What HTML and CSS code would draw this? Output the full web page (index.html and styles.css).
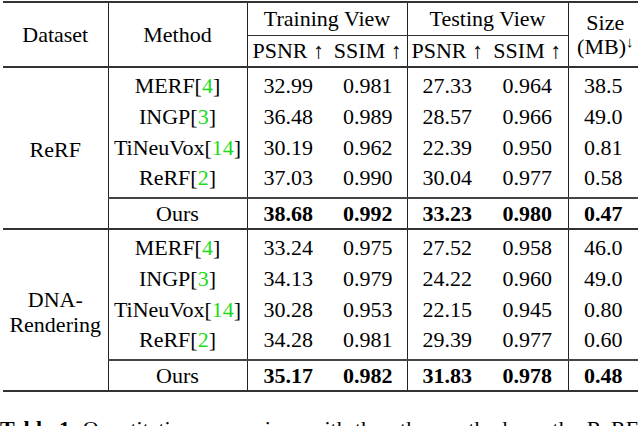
FILE: index.html
```html
<!DOCTYPE html>
<html lang="en">
<head>
  <meta charset="UTF-8">
  <title>Table 1</title>
  <link rel="stylesheet" href="styles.css">
</head>
<body>

  <table class="results">
    <colgroup>
      <col class="c-data">
      <col class="c-method">
      <col class="c-psnr1">
      <col class="c-ssim1">
      <col class="c-psnr2">
      <col class="c-ssim2">
      <col class="c-size">
    </colgroup>
    <thead>
      <tr class="h1">
        <th rowspan="2" class="vr">Dataset</th>
        <th rowspan="2" class="vr">Method</th>
        <th colspan="2" class="vr under">Training View</th>
        <th colspan="2" class="vr under">Testing View</th>
        <th rowspan="2" class="size">Size (MB)<sup>↓</sup></th>
      </tr>
      <tr class="h2">
        <th>PSNR ↑</th>
        <th class="vr">SSIM ↑</th>
        <th>PSNR ↑</th>
        <th class="vr">SSIM ↑</th>
      </tr>
    </thead>

    <tbody class="group">
      <tr class="first">
        <td rowspan="5" class="vr dataset">ReRF</td>
        <td class="vr">MERF[<span class="cite">4</span>]</td>
        <td>32.99</td><td class="vr">0.981</td>
        <td>27.33</td><td class="vr">0.964</td>
        <td>38.5</td>
      </tr>
      <tr>
        <td class="vr">INGP[<span class="cite">3</span>]</td>
        <td>36.48</td><td class="vr">0.989</td>
        <td>28.57</td><td class="vr">0.966</td>
        <td>49.0</td>
      </tr>
      <tr>
        <td class="vr">TiNeuVox[<span class="cite">14</span>]</td>
        <td>30.19</td><td class="vr">0.962</td>
        <td>22.39</td><td class="vr">0.950</td>
        <td>0.81</td>
      </tr>
      <tr class="last">
        <td class="vr">ReRF[<span class="cite">2</span>]</td>
        <td>37.03</td><td class="vr">0.990</td>
        <td>30.04</td><td class="vr">0.977</td>
        <td>0.58</td>
      </tr>
      <tr class="ours">
        <td class="vr">Ours</td>
        <td><b>38.68</b></td><td class="vr"><b>0.992</b></td>
        <td><b>33.23</b></td><td class="vr"><b>0.980</b></td>
        <td><b>0.47</b></td>
      </tr>
    </tbody>

    <tbody class="group">
      <tr class="first">
        <td rowspan="5" class="vr dataset">DNA-<br>Rendering</td>
        <td class="vr">MERF[<span class="cite">4</span>]</td>
        <td>33.24</td><td class="vr">0.975</td>
        <td>27.52</td><td class="vr">0.958</td>
        <td>46.0</td>
      </tr>
      <tr>
        <td class="vr">INGP[<span class="cite">3</span>]</td>
        <td>34.13</td><td class="vr">0.979</td>
        <td>24.22</td><td class="vr">0.960</td>
        <td>49.0</td>
      </tr>
      <tr>
        <td class="vr">TiNeuVox[<span class="cite">14</span>]</td>
        <td>30.28</td><td class="vr">0.953</td>
        <td>22.15</td><td class="vr">0.945</td>
        <td>0.80</td>
      </tr>
      <tr class="last">
        <td class="vr">ReRF[<span class="cite">2</span>]</td>
        <td>34.28</td><td class="vr">0.981</td>
        <td>29.39</td><td class="vr">0.977</td>
        <td>0.60</td>
      </tr>
      <tr class="ours">
        <td class="vr">Ours</td>
        <td><b>35.17</b></td><td class="vr"><b>0.982</b></td>
        <td><b>31.83</b></td><td class="vr"><b>0.978</b></td>
        <td><b>0.48</b></td>
      </tr>
    </tbody>
  </table>

  <p class="caption"><b>Table 1.</b> Quantitative comparison with the other methods on the ReRF and DNA-Rendering datasets.</p>

</body>
</html>
```

FILE: styles.css
```css
body {
  font-family: "Liberation Serif", Tinos, "DejaVu Serif", serif;
  font-size: 22px;
  color: #000;
  background: #fff;
  margin: 0;
  padding: 1px 0 0 3px;
}
/* Main table */
.results {
  border-collapse: collapse;
  table-layout: fixed;
  width: 635px;
  border-top: 2px solid #333;
  border-bottom: 2px solid #333;
}
.c-data { width: 105px; }
.c-method { width: 139px; }
.c-psnr1 { width: 82px; }
.c-ssim1 { width: 78px; }
.c-psnr2 { width: 80px; }
.c-ssim2 { width: 81px; }
.c-size { width: 70px; }

.results th,
.results td {
  font-weight: normal;
  text-align: center;
  vertical-align: middle;
  padding: 0;
  white-space: nowrap;
  line-height: 24px;
}
.results .vr {
  border-right: 1px solid #222;
}
/* Header */
.h1 { height: 33px; }
.h2 { height: 32px; }
.results th.under {
  border-bottom: 1px solid #333;
}
.results thead {
  border-bottom: 2px solid #333;
}
.results th.size {
  white-space: normal;
  padding-left: 4px;
}
.size sup {
  font-size: 15px;
  vertical-align: 7px;
  line-height: 0;
}
/* Body */
.group tr { height: 31px; }
.group tr.first { height: 34px; }
.group tr.first td { padding-top: 3px; }
.group tr.last { height: 35px; }
.group tr.last td { padding-bottom: 4px; }
.group td.dataset {
  padding: 0;
  line-height: 25px;
}
.group tr.ours { height: 31px; }
.group tr.ours td {
  border-top: 2px solid #444;
}
.group + .group {
  border-top: 2px solid #333;
}
.cite {
  color: #1bdc1b;
}
/* Caption */
.caption {
  margin: 24px 0 0 -3px;
  width: 638px;
  text-align: justify;
}
```
